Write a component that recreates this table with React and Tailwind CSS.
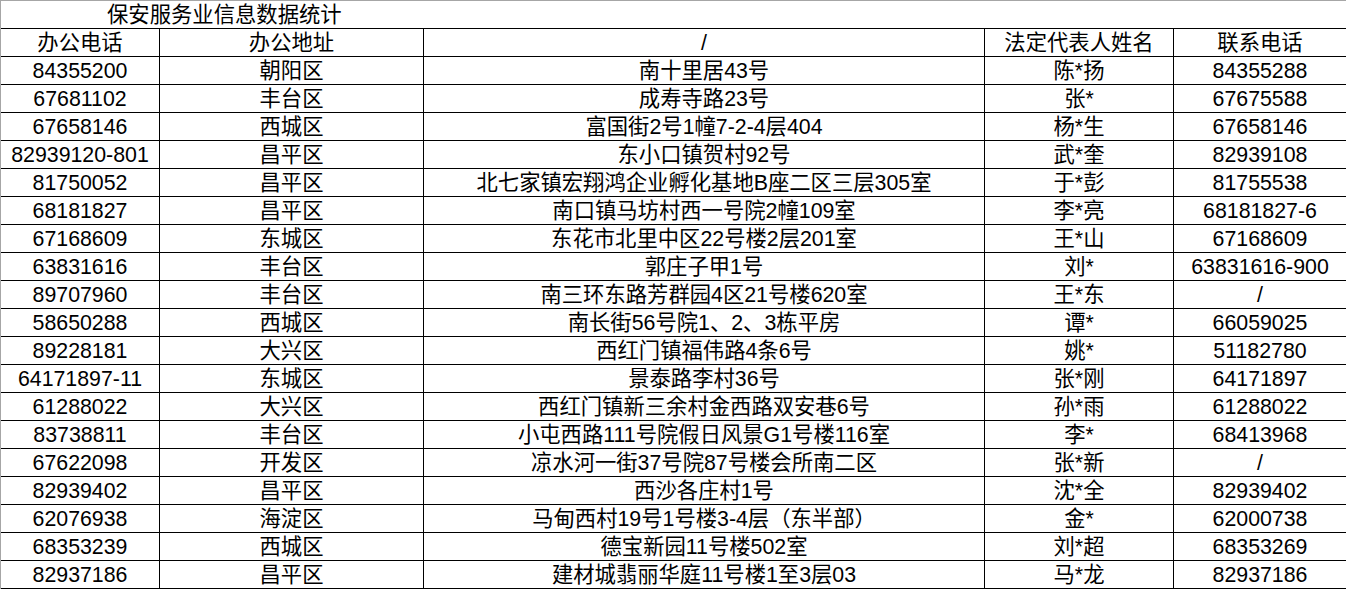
import React from "react";

const rows = [
  ["84355200", "朝阳区", "南十里居43号", "陈*扬", "84355288"],
  ["67681102", "丰台区", "成寿寺路23号", "张*", "67675588"],
  ["67658146", "西城区", "富国街2号1幢7-2-4层404", "杨*生", "67658146"],
  ["82939120-801", "昌平区", "东小口镇贺村92号", "武*奎", "82939108"],
  ["81750052", "昌平区", "北七家镇宏翔鸿企业孵化基地B座二区三层305室", "于*彭", "81755538"],
  ["68181827", "昌平区", "南口镇马坊村西一号院2幢109室", "李*亮", "68181827-6"],
  ["67168609", "东城区", "东花市北里中区22号楼2层201室", "王*山", "67168609"],
  ["63831616", "丰台区", "郭庄子甲1号", "刘*", "63831616-900"],
  ["89707960", "丰台区", "南三环东路芳群园4区21号楼620室", "王*东", "/"],
  ["58650288", "西城区", "南长街56号院1、2、3栋平房", "谭*", "66059025"],
  ["89228181", "大兴区", "西红门镇福伟路4条6号", "姚*", "51182780"],
  ["64171897-11", "东城区", "景泰路李村36号", "张*刚", "64171897"],
  ["61288022", "大兴区", "西红门镇新三余村金西路双安巷6号", "孙*雨", "61288022"],
  ["83738811", "丰台区", "小屯西路111号院假日风景G1号楼116室", "李*", "68413968"],
  ["67622098", "开发区", "凉水河一街37号院87号楼会所南二区", "张*新", "/"],
  ["82939402", "昌平区", "西沙各庄村1号", "沈*全", "82939402"],
  ["62076938", "海淀区", "马甸西村19号1号楼3-4层（东半部）", "金*", "62000738"],
  ["68353239", "西城区", "德宝新园11号楼502室", "刘*超", "68353269"],
  ["82937186", "昌平区", "建材城翡丽华庭11号楼1至3层03", "马*龙", "82937186"],
];

const header = ["办公电话", "办公地址", "/", "法定代表人姓名", "联系电话"];

function Row({ cells }) {
  return (
    <div className="flex h-[28px] border-b border-black">
      <div className="w-[159px] shrink-0 border-r border-black flex items-center justify-center whitespace-nowrap pt-[3px]">
        {cells[0]}
      </div>
      <div className="w-[264px] shrink-0 border-r border-black flex items-center justify-center whitespace-nowrap pt-[3px]">
        {cells[1]}
      </div>
      <div className="w-[561px] shrink-0 border-r border-black flex items-center justify-center whitespace-nowrap pt-[3px]">
        {cells[2]}
      </div>
      <div className="w-[189px] shrink-0 border-r border-black flex items-center justify-center whitespace-nowrap pt-[3px]">
        {cells[3]}
      </div>
      <div className="flex-1 flex items-center justify-center whitespace-nowrap pt-[3px]">
        {cells[4]}
      </div>
    </div>
  );
}

export default function App() {
  return (
    <div
      className="w-[1346px] h-[589px] overflow-hidden bg-white text-black border-t border-l border-[#a6a6a6] text-[21.33px] leading-none"
      style={{ fontFamily: '"Liberation Sans", "Noto Sans CJK SC", sans-serif' }}
    >
      <div className="h-[28px] border-b border-black flex items-center pl-[106px] pt-[3px]">
        保安服务业信息数据统计
      </div>
      <Row cells={header} />
      {rows.map((r, i) => (
        <Row key={i} cells={r} />
      ))}
    </div>
  );
}
